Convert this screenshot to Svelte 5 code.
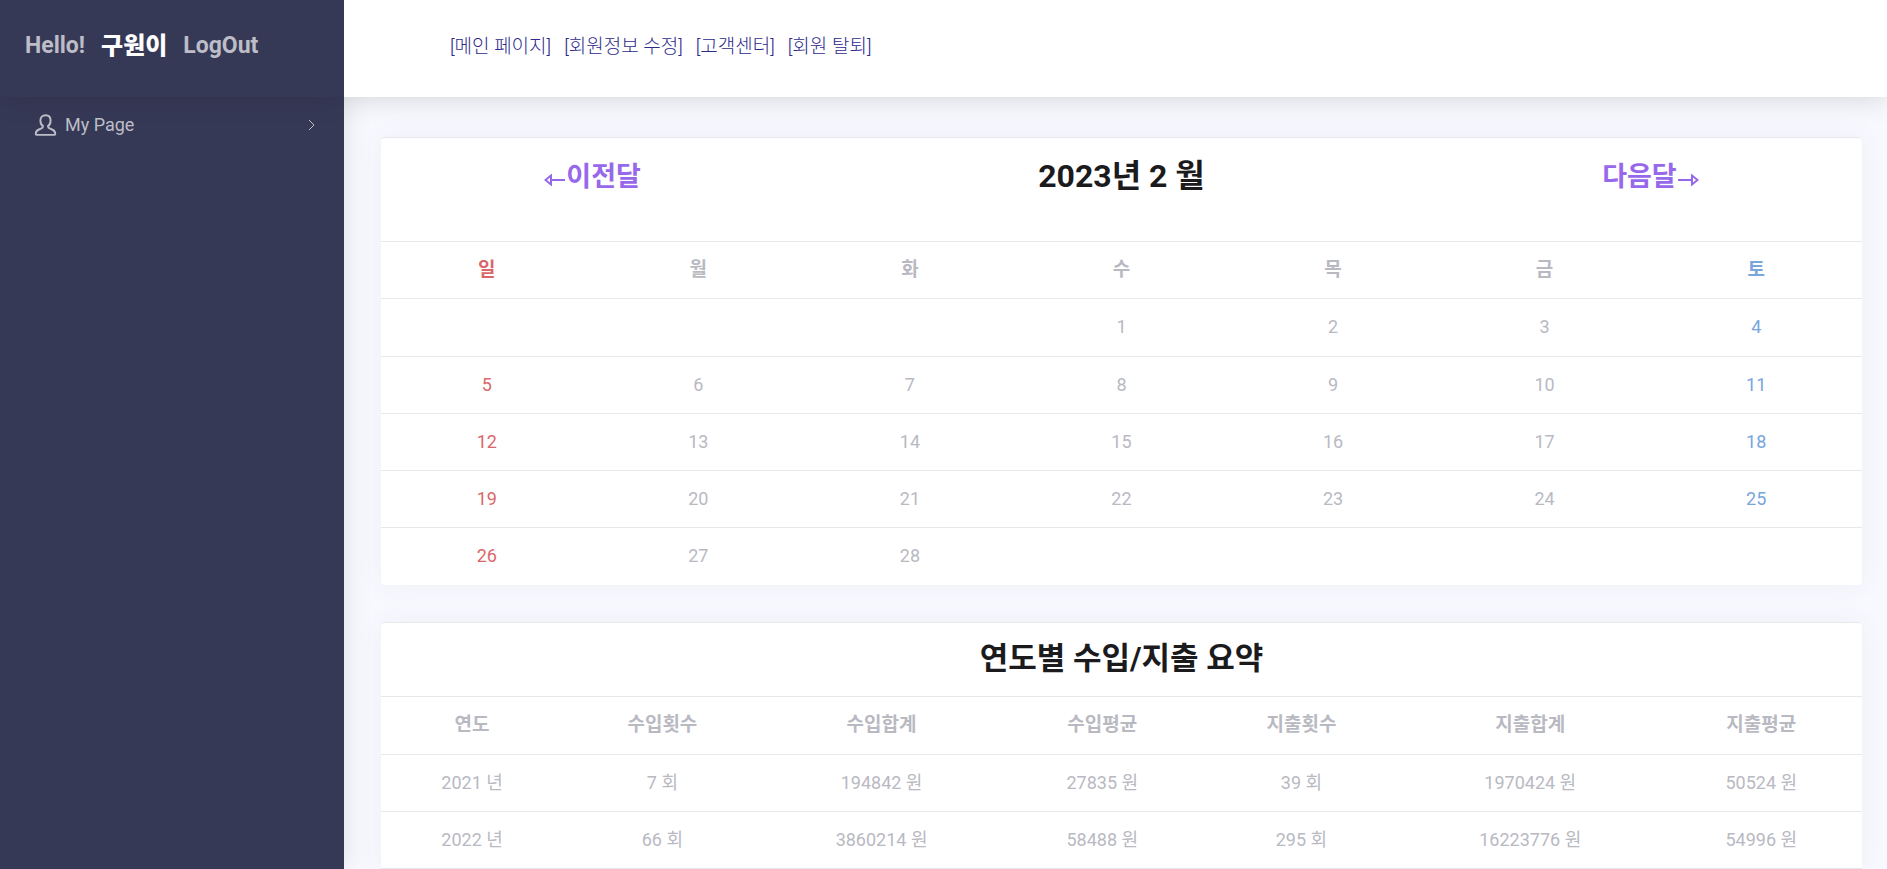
<script>
  const weekdays = ['일', '월', '화', '수', '목', '금', '토'];
  const firstWeekday = 3;
  const dayCount = 28;

  const weeks = Array.from({ length: Math.ceil((firstWeekday + dayCount) / 7) }, (_, w) =>
    Array.from({ length: 7 }, (_, d) => {
      const day = w * 7 + d - firstWeekday + 1;
      return day > 0 && day <= dayCount ? day : '';
    })
  );

  const links = ['[메인 페이지]', '[회원정보 수정]', '[고객센터]', '[회원 탈퇴]'];

  const columns = [
    { label: '연도', width: 12.3 },
    { label: '수입횟수', width: 13.4 },
    { label: '수입합계', width: 16.2 },
    { label: '수입평균', width: 13.6 },
    { label: '지출횟수', width: 13.3 },
    { label: '지출합계', width: 17.6 },
    { label: '지출평균', width: 13.6 }
  ];
  const summary = [
    ['2021 년', '7 회', '194842 원', '27835 원', '39 회', '1970424 원', '50524 원'],
    ['2022 년', '66 회', '3860214 원', '58488 원', '295 회', '16223776 원', '54996 원']
  ];
</script>

<div class="page">
  <aside class="sidebar">
    <div class="brand">
      <span>Hello!</span>
      <strong>구원이</strong>
      <a href="#logout">LogOut</a>
    </div>
    <nav>
      <a class="item" href="#mypage">
        <svg class="user" viewBox="0 0 24 24" aria-hidden="true">
          <path d="M9.4 13.2C7.4 12 6.700 9.800 6.700 7.300 6.700 4 8.800 1.800 12 1.800s5.300 2.200 5.300 5.500c0 2.500-.7 4.700-2.700 5.900 0 1.300.6 1.900 2.200 2.600 3.400 1.300 5.400 2.200 5.400 5.600 0 .6-.3.900-.9.900H2.700c-.6 0-.9-.3-.9-.9 0-3.400 2-4.300 5.400-5.600 1.600-.7 2.200-1.300 2.200-2.600Z" />
        </svg>
        <span class="label">My Page</span>
        <svg class="chevron" viewBox="0 0 12 12" aria-hidden="true"><path d="M3 1 8 6l-5 5" /></svg>
      </a>
    </nav>
  </aside>

  <div class="content">
    <header>
      <nav class="links">
        {#each links as link}<a href="#link">{link}</a>{/each}
      </nav>
    </header>

    <main>
      <section class="card">
        <div class="month">
          <a href="#prev">
            <svg class="arrow" viewBox="0 0 22 12" aria-hidden="true"><path d="M7 6h14M7 1.500v9L1.500 6Z" /></svg>이전달
          </a>
          <h1>2023년 2 월</h1>
          <a href="#next">
            다음달<svg class="arrow" viewBox="0 0 22 12" aria-hidden="true"><path d="M1 6h14M15 1.500v9L20.500 6Z" /></svg>
          </a>
        </div>
        <table class="calendar">
          <thead>
            <tr>{#each weekdays as name}<th scope="col">{name}</th>{/each}</tr>
          </thead>
          <tbody>
            {#each weeks as week}
              <tr>{#each week as day}<td>{day}</td>{/each}</tr>
            {/each}
          </tbody>
        </table>
      </section>

      <section class="card">
        <h2>연도별 수입/지출 요약</h2>
        <table class="summary">
          <colgroup>
            {#each columns as col}<col style="width: {col.width}%" />{/each}
          </colgroup>
          <thead>
            <tr>{#each columns as col}<th scope="col">{col.label}</th>{/each}</tr>
          </thead>
          <tbody>
            {#each summary as row}
              <tr>{#each row as cell}<td>{cell}</td>{/each}</tr>
            {/each}
          </tbody>
        </table>
      </section>
    </main>
  </div>
</div>

<style>
  :global(body) {
    margin: 0;
    background: #f8f9ff;
    font-family: Roboto, 'Noto Sans CJK KR', sans-serif;
    font-weight: 400;
  }

  a {
    color: inherit;
    text-decoration: none;
  }

  .page {
    display: flex;
    height: 100vh;
    overflow: hidden;
  }

  .sidebar {
    position: relative;
    z-index: 1;
    flex: 0 0 344px;
    background: #363956;
    color: #bdbdc7;
    box-shadow: 0 0 28px rgba(0, 0, 0, 0.1);
  }

  .brand {
    box-sizing: border-box;
    display: flex;
    gap: 16px;
    height: 97px;
    padding: 30px 25px;
    font-size: 23px;
    font-weight: 700;
    line-height: 32px;
    box-shadow: 0 0 28px rgba(0, 0, 0, 0.13);
  }

  .brand strong {
    color: #fff;
    font-size: 24px;
  }

  .item {
    display: flex;
    align-items: center;
    padding: 14px 26px 14px 34px;
    font-size: 18px;
    line-height: 28px;
  }

  .user {
    width: 23px;
    height: 24px;
    margin-right: 8px;
    fill: none;
    stroke: currentColor;
    stroke-width: 2;
  }

  .label {
    flex: 1;
  }

  .chevron {
    width: 12px;
    height: 12px;
    fill: none;
    stroke: currentColor;
    stroke-width: 1;
  }

  .content {
    flex: 1;
    min-width: 0;
  }

  header {
    position: relative;
    z-index: 2;
    box-sizing: border-box;
    height: 97px;
    padding: 31px 106px;
    background: #fff;
    box-shadow: 0 0 28px rgba(0, 0, 0, 0.16);
    clip-path: inset(0 0 -40px 0);
  }

  .links {
    display: flex;
    gap: 13px;
    color: #2d2a8c;
    font-size: 19px;
    font-weight: 300;
    line-height: 32px;
  }

  main {
    display: flex;
    flex-direction: column;
    gap: 37px;
    padding: 40px 25px 37px 37px;
  }

  .card {
    padding-bottom: 1px;
    border-top: 1px solid #e8e8ea;
    border-radius: 4px;
    background: #fff;
    box-shadow: 0 0 28px rgba(82, 63, 105, 0.06);
    color: #b9b9c2;
  }

  .month {
    display: grid;
    grid-template-columns: 2fr 3fr 2fr;
    height: 103px;
    text-align: center;
  }

  .month a {
    padding-top: 21px;
    color: #9769ea;
    font-size: 27px;
    font-weight: 700;
    line-height: 36px;
  }

  .arrow {
    width: 22px;
    height: 12px;
    fill: none;
    stroke: currentColor;
    stroke-width: 2;
  }

  h1,
  h2 {
    margin: 0;
    color: #1b1a1d;
    font-size: 32px;
    font-weight: 700;
    line-height: 36px;
    text-align: center;
  }

  h1 {
    padding-top: 20px;
  }

  h2 {
    padding: 18px 0 19px;
    font-size: 31px;
  }

  table {
    width: 100%;
    border-collapse: collapse;
    table-layout: fixed;
    font-size: 18px;
    line-height: 24px;
    text-align: center;
  }

  th,
  td {
    padding: 16px 0;
    border-top: 1px solid #e8e8ea;
    font-weight: 400;
  }

  th {
    font-size: 19px;
    font-weight: 700;
  }

  .calendar tbody tr:first-child td {
    padding-bottom: 17px;
  }

  .summary th {
    padding-bottom: 17px;
  }

  .summary tbody {
    border-bottom: 1px solid #e8e8ea;
  }

  .calendar tr > :first-child {
    color: #d9686a;
  }

  .calendar tr > :last-child {
    color: #79a5de;
  }
</style>
